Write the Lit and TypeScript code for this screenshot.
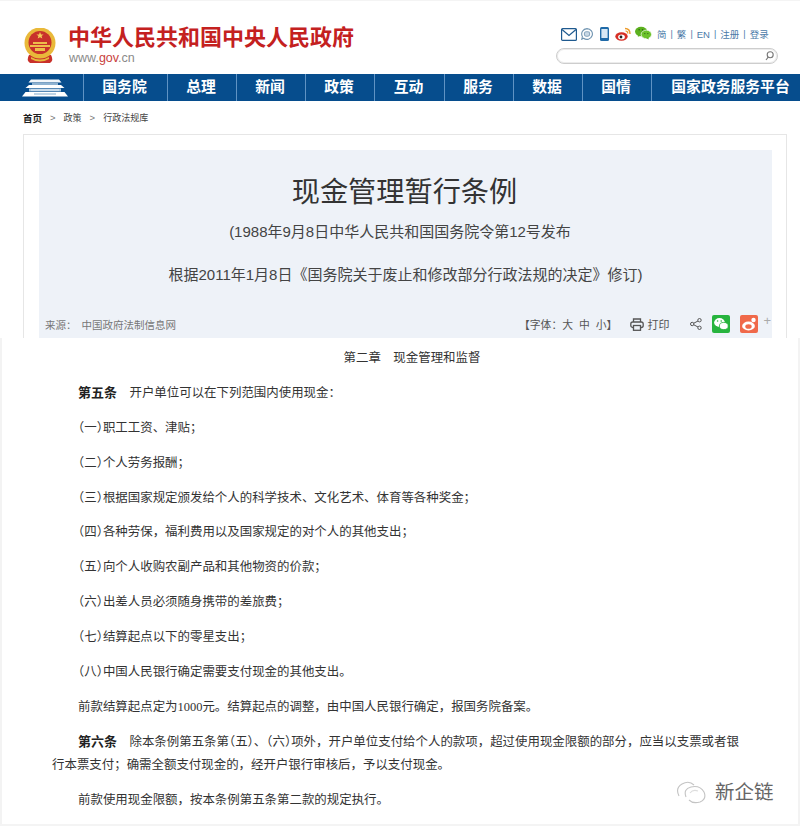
import { LitElement, html, css, svg } from "lit";
import { customElement } from "lit/decorators.js";

const emblem = svg`<svg class="emblem" viewBox="0 0 34 36" width="34" height="36">
  <path d="M6 27 Q3 32 7 35 H27 Q31 32 28 27 Z" fill="#c9302a"/>
  <path d="M8 29 Q17 34 26 29 L26 31 Q17 36 8 31 Z" fill="#e6b93d"/>
  <circle cx="17" cy="15" r="15.5" fill="#e9b93a"/>
  <circle cx="17" cy="14.5" r="11.5" fill="#c8322b"/>
  <path d="M7 17 H27 V19 H7 Z M10 14 H24 V16 H10 Z M12 20 H22 V23 H12 Z" fill="#eebf4a"/>
  <path d="M17 4 l1 2.4 2.6.1-2 1.6.7 2.5-2.3-1.4-2.3 1.4.7-2.5-2-1.6 2.6-.1z" fill="#f2cb57"/>
  <path d="M6 24 Q17 31 28 24 L27 27 Q17 32 7 27 Z" fill="#e9b93a"/>
</svg>`;

const tiananmen = svg`<svg viewBox="0 0 46 18" width="46" height="18">
  <path d="M9 0.5 H37 L39.5 3.5 H6.5 Z" fill="#f2f6fa"/>
  <path d="M10 4 H36 V6 H10 Z" fill="#8fb3d2"/>
  <path d="M7 6 H39 L42.5 9 H3.5 Z" fill="#ffffff"/>
  <path d="M7 9.5 H39 V12.5 H7 Z" fill="#a9c6de"/>
  <path d="M9 10.5 H37 V11.5 H9 Z" fill="#eaf2f8"/>
  <path d="M3.5 13 H42.5 L46 17.5 H0 Z" fill="#ffffff"/>
  <path d="M12 14.5 H34 V15.5 H12 Z" fill="#7fa8cb"/>
</svg>`;

@customElement("app-root")
export class AppRoot extends LitElement {
  static styles = css`
    :host {
      display: block;
      width: 800px;
      height: 826px;
      overflow: hidden;
      background: #fff;
      font-family: "Liberation Sans", "Noto Sans CJK SC", sans-serif;
      color: #333;
    }
    .head {
      height: 74px;
      box-sizing: border-box;
      padding: 24px 22px 0 23px;
      border-top: 1px solid #f4f4f4;
      display: flex;
      justify-content: space-between;
    }
    .brand { display: flex; gap: 11px; }
    .emblem { margin-top: 3px; }
    .site {
      font-size: 22px;
      line-height: 26px;
      font-weight: 700;
      color: #c4211f;
    }
    .url { font-size: 12.5px; line-height: 14px; color: #8a8a8a; margin: 0 0 0 1px; }
    .url b { font-weight: 400; color: #c9413c; }
    .tools { width: 222px; }
    .tool-row {
      display: flex;
      align-items: center;
      height: 20px;
      margin-top: -1px;
      margin-left: 5px;
      font-size: 9.5px;
      white-space: nowrap;
      color: #4a7aa8;
    }
    .tool-row svg { display: block; flex: none; }
    .i1 { margin-right: 4px; }
    .i2 { margin-right: 7px; }
    .i3 { margin-right: 6px; }
    .i4 { margin-right: 4px; }
    .i5 { margin-right: 5px; margin-top: -3px; }
    .sep { margin: 0 4px; color: #4a7aa8; font-size: 9px; }
    .search {
      height: 16px;
      box-sizing: border-box;
      margin-top: 4px;
      border: 1px solid #cdcdcd;
      border-radius: 8px;
      box-shadow: inset 0 0 0 1px #ececec;
      display: flex;
      justify-content: flex-end;
      align-items: center;
      padding-right: 3px;
    }
    nav {
      height: 27px;
      background: #064d8d;
      display: grid;
      grid-template-columns: 83px 84px 69px 69px 69px 70px 69px 69px 69px 1fr;
      color: #fff;
      font-size: 14.8px;
      font-weight: 700;
      line-height: 27px;
      text-align: center;
    }
    nav > div { border-left: 1px solid #5f93c4; box-sizing: border-box; padding-right: 2px; }
    nav > div:first-child { border-left: 0; padding: 0 0 0 7px; display: flex; align-items: center; justify-content: center; }
    nav > div:last-child { padding: 0 0 0 9px; white-space: nowrap; }
    .crumbs {
      height: 33px;
      box-sizing: border-box;
      padding-left: 23px;
      display: flex;
      align-items: center;
      font-size: 9px;
      color: #444;
    }
    .crumbs b { color: #222; font-size: 9.5px; }
    .crumbs i { font-style: normal; font-size: 9.5px; margin: 0 8px; color: #777; }
    .card {
      margin: 0 13px 0 23px;
      height: 204px;
      box-sizing: border-box;
      padding: 15px 14px 0 15px;
      border: 1px solid #e6e6e6;
      border-bottom: 0;
    }
    .panel {
      height: 188px;
      background: #eef2f8;
      position: relative;
      text-align: center;
      box-sizing: border-box;
      padding-top: 22px;
    }
    h1 { margin: 0; padding-right: 2px; font-size: 28.2px; font-weight: 400; line-height: 40px; color: #333; }
    .sub { font-size: 15px; line-height: 24px; color: #444; margin: 8px 0 0; }
    .sub.first { padding-right: 11px; }
    .sub + .sub { margin-top: 19px; }
    .meta {
      position: absolute;
      left: 6px;
      right: 0;
      top: 164px;
      height: 20px;
      display: flex;
      align-items: center;
      font-size: 10.5px;
      color: #777;
    }
    .src { margin-right: 5px; }
    .meta .right { margin-left: auto; display: flex; align-items: center; color: #555; }
    .fs { margin-right: 13px; font-size: 10.8px; }
    .print { display: flex; align-items: center; gap: 3px; margin-right: 21px; font-size: 11px; }
    .share { display: flex; align-items: center; gap: 10px; }
    .plus { color: #aaa; font-size: 13px; line-height: 12px; margin: -6px 1px 0 5px; }
    .sheet {
      box-sizing: border-box;
      height: 488px;
      margin: 0 2px;
      padding: 9px 58px 0 50px;
      background: #fff;
      font-family: "Liberation Serif", "Noto Sans CJK SC", serif;
      font-size: 12.45px;
      line-height: 23px;
      color: #333;
    }
    .sheet p { margin: 0 0 11.9px; text-indent: 26px; white-space: nowrap; }
    .sheet p.c { text-align: center; text-indent: 0; padding-left: 32px; }
    .sheet p b { color: #222; font-size: 13px; line-height: 1; }
    .hw { font-feature-settings: "halt"; }
    .mark {
      position: absolute;
      left: 676px;
      top: 778px;
      display: flex;
      align-items: center;
      gap: 7px;
      color: #666;
      font-family: "Noto Sans CJK SC", sans-serif;
      font-size: 19.5px;
      line-height: 26px;
    }
    .wrap { position: relative; }
    .edge {
      position: absolute;
      top: 338px;
      bottom: 0;
      width: 2px;
      background: #f3f3f3;
    }
    .edge.l { left: 0; }
    .edge.r { right: 0; }
    .bottom {
      position: absolute;
      left: 0;
      right: 0;
      bottom: 0;
      height: 2px;
      background: #f4f4f4;
    }
  `;

  render() {
    return html`<div class="wrap">
      <div class="head">
        <div class="brand">
          ${emblem}
          <div>
            <div class="site">中华人民共和国中央人民政府</div>
            <div class="url">www.<b>gov</b>.cn</div>
          </div>
        </div>
        <div class="tools">
          <div class="tool-row">
            <svg class="i1" width="16" height="13" viewBox="0 0 16 13" fill="none" stroke="#1f5a8f" stroke-width="1.2"><rect x=".6" y=".6" width="14.8" height="11.8" rx="1"/><path d="M1 1.5 L8 7.5 L15 1.5"/></svg>
            <svg class="i2" width="12" height="12" viewBox="0 0 12 12" fill="none" stroke="#6f93b0" stroke-width="1.1"><path d="M6 .6 A5.4 5.4 0 1 1 2.6 10.2 L.8 11.2 L1.4 8.6 A5.4 5.4 0 0 1 6 .6 Z"/><rect x="3.4" y="3.8" width="5.2" height="4.4" rx="1.6" fill="#c9d8e5" stroke="#8aa7bf"/></svg>
            <svg class="i3" width="9" height="14" viewBox="0 0 9 14"><rect width="9" height="14" rx="1.5" fill="#1f6aa8"/><rect x="1.4" y="2" width="6.2" height="9" fill="#d8e8f5"/></svg>
            <svg class="i4" width="16" height="14" viewBox="0 0 16 14"><ellipse cx="6.5" cy="9.5" rx="6.2" ry="4.2" fill="#d62f25"/><ellipse cx="6.5" cy="10" rx="3.4" ry="2.5" fill="#fff"/><circle cx="6" cy="10" r="1.4" fill="#222"/><path d="M10 1.5 Q15 1.5 15 7" fill="none" stroke="#ec9b2c" stroke-width="1.4"/><path d="M10.5 4 Q12.8 4 12.8 6.5" fill="none" stroke="#ec9b2c" stroke-width="1.2"/></svg>
            <svg class="i5" width="17" height="14" viewBox="0 0 18 14"><ellipse cx="6.5" cy="5.5" rx="6.5" ry="5" fill="#5cb11f"/><ellipse cx="12" cy="8.5" rx="5.5" ry="4.5" fill="#6cc22a" stroke="#fff" stroke-width=".7"/><path d="M3 11 L3.5 8 L6 10 Z M14.5 14 L14 11 L12 12.5 Z" fill="#5cb11f"/><circle cx="4.4" cy="3.6" r=".8" fill="#2e6a10"/><circle cx="8" cy="3.6" r=".8" fill="#2e6a10"/><circle cx="10.4" cy="7.6" r=".7" fill="#2e6a10"/><circle cx="13.6" cy="7.6" r=".7" fill="#2e6a10"/></svg>
            <span>简</span><span class="sep">|</span><span>繁</span><span class="sep">|</span><span>EN</span><span class="sep">|</span><span>注册</span><span class="sep">|</span><span>登录</span>
          </div>
          <div class="search">
            <svg width="9" height="10" viewBox="0 0 9 10" fill="none" stroke="#777" stroke-width="1.1"><circle cx="5.2" cy="3.8" r="3"/><path d="M3.2 6.2 L1 9"/></svg>
          </div>
        </div>
      </div>
      <nav>
        <div>${tiananmen}</div>
        <div>国务院</div><div>总理</div><div>新闻</div><div>政策</div><div>互动</div><div>服务</div><div>数据</div><div>国情</div><div>国家政务服务平台</div>
      </nav>
      <div class="crumbs"><b>首页</b><i>&gt;</i><span>政策</span><i>&gt;</i><span>行政法规库</span></div>
      <div class="card">
        <div class="panel">
          <h1>现金管理暂行条例</h1>
          <div class="sub first">(1988年9月8日中华人民共和国国务院令第12号发布</div>
          <div class="sub">根据2011年1月8日《国务院关于废止和修改部分行政法规的决定》修订)</div>
          <div class="meta">
            <span class="src">来源：</span><span>中国政府法制信息网</span>
            <div class="right">
              <span class="fs">【字体：大&nbsp;&nbsp;中&nbsp;&nbsp;小】</span>
              <span class="print">
                <svg width="14" height="13" viewBox="0 0 14 13" fill="none" stroke="#555" stroke-width="1.3"><path d="M3.5 4 V1 H10.5 V4"/><rect x=".8" y="4" width="12.4" height="5.5" rx="2"/><rect x="3.5" y="7.5" width="7" height="4.8" fill="#eef2f8"/></svg>打印
              </span>
              <span class="share">
                <svg width="12" height="12" viewBox="0 0 12 12" fill="none" stroke="#555" stroke-width="1"><circle cx="2.2" cy="6" r="1.7"/><circle cx="9.5" cy="2.2" r="1.7"/><circle cx="9.5" cy="9.8" r="1.7"/><path d="M3.8 5.2 L8 3 M3.8 6.8 L8 9"/></svg>
                <svg width="18" height="18" viewBox="0 0 18 18"><rect width="18" height="18" rx="2" fill="#27b43e"/><ellipse cx="7.5" cy="7.5" rx="5.4" ry="4.4" fill="#fff"/><ellipse cx="11.8" cy="11" rx="4.4" ry="3.6" fill="#fff" stroke="#27b43e" stroke-width=".8"/><circle cx="5.6" cy="6" r=".8" fill="#27b43e"/><circle cx="9.2" cy="6" r=".8" fill="#27b43e"/></svg>
                <svg width="18" height="18" viewBox="0 0 18 18"><rect width="18" height="18" rx="2" fill="#f0694a"/><ellipse cx="8.5" cy="11" rx="6.4" ry="4.4" fill="#fff"/><ellipse cx="8.5" cy="11.5" rx="3.2" ry="2.3" fill="#f0694a"/><circle cx="13.5" cy="5" r="2.2" fill="#fff"/></svg>
              </span>
              <span class="plus">+</span>
            </div>
          </div>
        </div>
      </div>
      <div class="sheet">
        <p class="c">第二章　现金管理和监督</p>
        <p><b>第五条</b>　开户单位可以在下列范围内使用现金：</p>
        <p><span class="hw">（一）</span>职工工资、津贴；</p>
        <p><span class="hw">（二）</span>个人劳务报酬；</p>
        <p><span class="hw">（三）</span>根据国家规定颁发给个人的科学技术、文化艺术、体育等各种奖金；</p>
        <p><span class="hw">（四）</span>各种劳保，福利费用以及国家规定的对个人的其他支出；</p>
        <p><span class="hw">（五）</span>向个人收购农副产品和其他物资的价款；</p>
        <p><span class="hw">（六）</span>出差人员必须随身携带的差旅费；</p>
        <p><span class="hw">（七）</span>结算起点以下的零星支出；</p>
        <p><span class="hw">（八）</span>中国人民银行确定需要支付现金的其他支出。</p>
        <p>前款结算起点定为1000元。结算起点的调整，由中国人民银行确定，报国务院备案。</p>
        <p><b>第六条</b>　除本条例第五条第<span class="hw">（五）</span>、<span class="hw">（六）</span>项外，开户单位支付给个人的款项，超过使用现金限额的部分，应当以支票或者银<br />行本票支付；确需全额支付现金的，经开户银行审核后，予以支付现金。</p>
        <p>前款使用现金限额，按本条例第五条第二款的规定执行。</p>
      </div>
      <div class="edge l"></div>
      <div class="edge r"></div>
      <div class="bottom"></div>
      <div class="mark">
        <svg width="32" height="26" viewBox="0 0 32 26" fill="none" stroke="#c4c4c4" stroke-width="1.1"><path d="M3 18 Q-1 10 6 6 Q13 2 18 7"/><path d="M10 19 Q7 11 15 9 Q24 7 28 14 Q31 21 24 24 Q17 26 13 22"/><path d="M14 15 Q17 11 22 13" stroke="#ddd"/></svg>
        <span>新企链</span>
      </div>
    </div>`;
  }
}
